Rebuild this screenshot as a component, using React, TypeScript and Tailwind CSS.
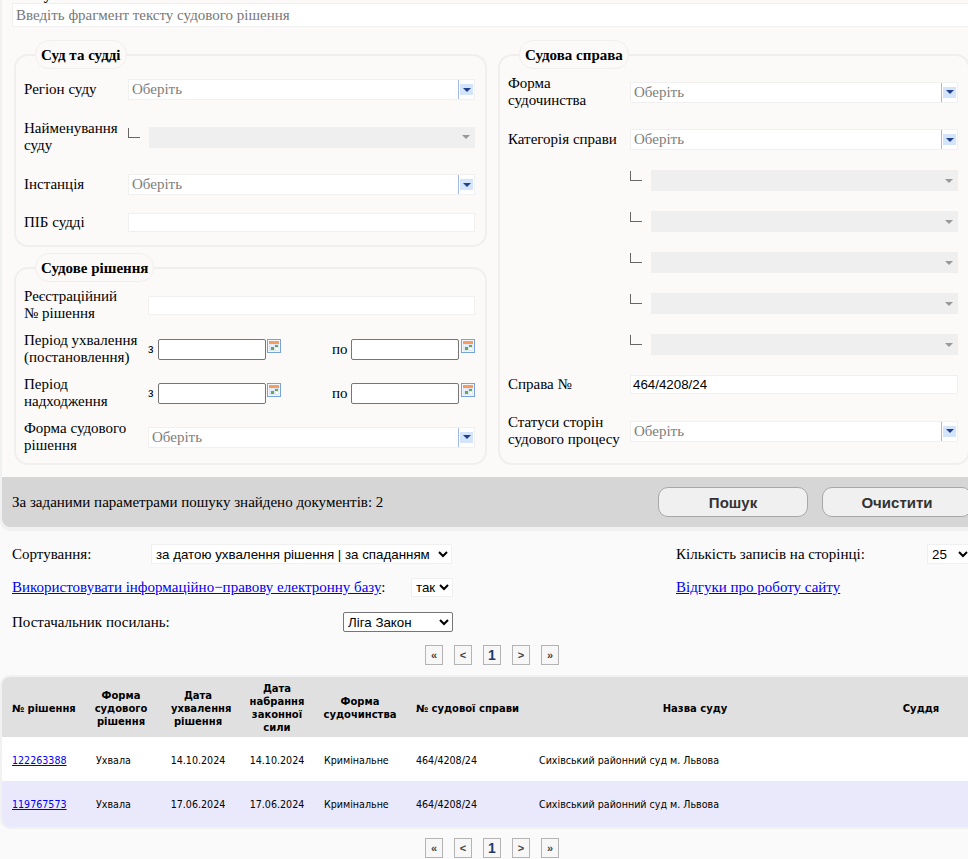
const serif = "font-['Liberation_Serif',serif]";

function Arrow() {
  return (
    <span className="flex h-full w-[15px] shrink-0 items-center border-l border-[#a3bbe3] pl-[1px]">
      <span className="flex h-[11px] w-[13px] items-center justify-center bg-[#d3e4fb]">
        <svg width="8" height="4" viewBox="0 0 8 4">
          <polygon points="0,0 8,0 4,4" fill="#22408c" />
        </svg>
      </span>
    </span>
  );
}

function Combo({ className = "" }: { className?: string }) {
  return (
    <div
      className={`flex h-[21px] items-center justify-between border border-[#f0f0f0] bg-white pl-[3px] text-[#7d7d7d] ${className}`}
    >
      <span>Оберіть</span>
      <span className="flex h-full items-center pr-[1px]">
        <Arrow />
      </span>
    </div>
  );
}

// disabled select with the little corner mark before it
function SubSelect({ className = "" }: { className?: string }) {
  return (
    <div className={`flex items-start ${className}`}>
      <div className="mt-[1px] h-[10px] w-[12px] shrink-0 border-b border-l border-[#666666]" />
      <div className="ml-[9px] flex h-[21px] flex-1 items-center justify-end bg-[#efefef] pr-[5px]">
        <svg width="8" height="4" viewBox="0 0 8 4">
          <polygon points="0,0 8,0 4,4" fill="#999999" />
        </svg>
      </div>
    </div>
  );
}

function TextBox({ value = "", className = "" }: { value?: string; className?: string }) {
  return (
    <div
      className={`flex h-[19px] items-center border border-[#f0f0f0] bg-white px-[2px] font-['Liberation_Sans',sans-serif] text-[13.33px] text-black ${className}`}
    >
      {value}
    </div>
  );
}

function CalendarIcon() {
  return (
    <svg width="14" height="14" viewBox="0 0 14 14" className="block">
      <rect x="0.5" y="0.5" width="13" height="13" fill="#f4f7fc" stroke="#78a2da" />
      <rect x="2" y="2" width="10" height="3" fill="#f79c5e" />
      <rect x="2" y="5" width="10" height="7" fill="#dfe8f6" />
      <rect x="3" y="6" width="1" height="1" fill="#ffffff" />
      <rect x="5" y="6" width="1" height="1" fill="#ffffff" />
      <rect x="8" y="6" width="3" height="2" fill="#6aa84f" />
      <rect x="4" y="8" width="3" height="3" fill="#6aa84f" />
      <rect x="9" y="9" width="2" height="2" fill="#ffffff" />
    </svg>
  );
}

function DateRange() {
  return (
    <div className="flex h-[21px] flex-1 items-center">
      <span className="w-[10px] font-['Liberation_Sans',sans-serif] text-[12px]">з</span>
      <div className="h-[21px] w-[108px] rounded-[2px] border border-[#767676] bg-white" />
      <span className="ml-[1px] self-start">
        <CalendarIcon />
      </span>
      <span className="ml-[51px] w-[19px]">по</span>
      <div className="h-[21px] w-[108px] rounded-[2px] border border-[#767676] bg-white" />
      <span className="ml-[2px] self-start">
        <CalendarIcon />
      </span>
    </div>
  );
}

function Group({
  title,
  width = "w-[472px]",
  children,
}: {
  title: string;
  width?: string;
  children: React.ReactNode;
}) {
  return (
    <fieldset className={`${width} min-w-0 rounded-[14px] border-2 border-[#f0efed]`}>
      <legend className="ml-[19px] h-[29px] rounded-[14px] border border-[#f0efed] bg-[#fbfaf8] px-[5px] text-[15px] leading-[28px] font-bold">
        {title}
      </legend>
      {children}
    </fieldset>
  );
}

function Pager({ className = "" }: { className?: string }) {
  const items = ["«", "<", "1", ">", "»"];
  return (
    <div className={`flex gap-[11px] pl-[425px] ${className}`}>
      {items.map((item, i) => (
        <span
          key={i}
          className={`flex h-[20px] w-[18px] items-center justify-center border border-[#b4b4b4] bg-[#f7f7f7] font-bold font-['Liberation_Sans',sans-serif] ${
            item === "1" ? "text-[14px] text-[#1f3a6e]" : "text-[11px] text-[#444444]"
          }`}
        >
          {item}
        </span>
      ))}
    </div>
  );
}

const rows = [
  { id: "122263388", date: "14.10.2024", bg: "bg-white h-[44px]", pad: "pt-[2px]" },
  { id: "119767573", date: "17.06.2024", bg: "bg-[#e9e9fb] h-[46px]", pad: "" },
];

export default function App() {
  return (
    <div className={`h-[859px] w-[968px] overflow-hidden bg-[#fafafa] text-[15px] leading-[17px] text-black ${serif}`}>
      <div className="w-[990px] rounded-bl-[10px] border-b-4 border-l-2 border-[#f1f1f1] bg-[#fbfaf8]">
        <div className="h-[3px] overflow-hidden pl-[10px]">
          <div className="-mt-[13px] font-bold">Пошук</div>
        </div>
        <div className="ml-[10px] flex h-[24px] w-[970px] items-center border border-[#f0f0f0] bg-white pl-[3px] text-[#777777]">
          Введіть фрагмент тексту судового рішення
        </div>

        <div className="mt-[13px] flex gap-[11px] pl-[12px]">
          <div className="flex flex-col gap-[6px]">
            <Group title="Суд та судді" width="w-[473px]">
              <div className="pb-[13px] pl-[8px] pr-[10px]">
                <div className="mt-[10px] flex items-center">
                  <span className="w-[104px]">Регіон суду</span>
                  <Combo className="flex-1" />
                </div>
                <div className="mt-[20px] flex h-[34px] items-center">
                  <span className="w-[104px]">Найменування суду</span>
                  <SubSelect className="flex-1" />
                </div>
                <div className="mt-[20px] flex items-center">
                  <span className="w-[104px]">Інстанція</span>
                  <Combo className="flex-1" />
                </div>
                <div className="mt-[18px] flex items-center">
                  <span className="w-[104px]">ПІБ судді</span>
                  <TextBox className="flex-1" />
                </div>
              </div>
            </Group>
            <Group title="Судове рішення" width="w-[473px]">
              <div className="pb-[9px] pl-[8px] pr-[10px]">
                <div className="mt-[6px] flex h-[34px] items-center">
                  <span className="w-[124px]">
                    Реєстраційний
                    <br />№ рішення
                  </span>
                  <TextBox className="flex-1" />
                </div>
                <div className="mt-[10px] flex h-[34px] items-center">
                  <span className="w-[125px]">
                    Період ухвалення
                    <br />
                    (постановлення)
                  </span>
                  <DateRange />
                </div>
                <div className="mt-[10px] flex h-[34px] items-center">
                  <span className="w-[125px]">
                    Період
                    <br />
                    надходження
                  </span>
                  <DateRange />
                </div>
                <div className="mt-[10px] flex h-[34px] items-center">
                  <span className="w-[124px]">
                    Форма судового
                    <br />
                    рішення
                  </span>
                  <Combo className="flex-1" />
                </div>
              </div>
            </Group>
          </div>

          <Group title="Судова справа">
            <div className="pb-[15px] pl-[8px] pr-[10px]">
              <div className="mt-[6px] flex h-[34px] items-center">
                <span className="w-[122px]">
                  Форма
                  <br />
                  судочинства
                </span>
                <Combo className="flex-1" />
              </div>
              <div className="mt-[20px] flex items-center">
                <span className="w-[122px]">Категорія справи</span>
                <Combo className="flex-1" />
              </div>
              <div className="mt-[20px] flex flex-col gap-[20px] pl-[122px]">
                <SubSelect />
                <SubSelect />
                <SubSelect />
                <SubSelect />
                <SubSelect />
              </div>
              <div className="mt-[20px] flex items-center">
                <span className="w-[122px]">Справа №</span>
                <TextBox className="flex-1" value="464/4208/24" />
              </div>
              <div className="mt-[20px] flex h-[34px] items-center">
                <span className="w-[122px]">
                  Статуси сторін
                  <br />
                  судового процесу
                </span>
                <Combo className="flex-1" />
              </div>
            </div>
          </Group>
        </div>

        <div className="mt-[12px] flex h-[50px] items-center rounded-bl-[8px] bg-[#d6d6d6] pl-[10px]">
          <span className="w-[646px]">За заданими параметрами пошуку знайдено документів: 2</span>
          <button className="h-[30px] w-[150px] rounded-[10px] border border-[#a8a8a8] bg-[#f0f0f0] font-['Liberation_Sans',sans-serif] text-[15px] font-bold text-[#333333]">
            Пошук
          </button>
          <button className="ml-[14px] h-[30px] w-[150px] rounded-[10px] border border-[#a8a8a8] bg-[#f0f0f0] font-['Liberation_Sans',sans-serif] text-[15px] font-bold text-[#333333]">
            Очистити
          </button>
        </div>
      </div>

      <div className="mt-[13px] flex h-[20px] w-[990px] items-center pl-[12px]">
        <span className="w-[139px]">Сортування:</span>
        <select className="h-[20px] w-[301px] border border-[#f0f0f0] bg-white font-['Liberation_Sans',sans-serif] text-[13.33px]">
          <option>за датою ухвалення рішення | за спаданням</option>
        </select>
        <span className="ml-[224px] w-[251px]">Кількість записів на сторінці:</span>
        <select className="h-[20px] w-[45px] border border-[#f0f0f0] bg-white font-['Liberation_Sans',sans-serif] text-[13.33px]">
          <option>25</option>
        </select>
      </div>

      <div className="mt-[14px] flex h-[19px] w-[990px] items-center pl-[12px]">
        <span className="w-[399px]">
          <a href="#" className="text-[#0000ee] underline">
            Використовувати інформаційно−правову електронну базу
          </a>
          :
        </span>
        <select className="h-[19px] w-[42px] border border-[#f0f0f0] bg-white font-['Liberation_Sans',sans-serif] text-[13.33px]">
          <option>так</option>
        </select>
        <a href="#" className="ml-[223px] text-[#0000ee] underline">
          Відгуки про роботу сайту
        </a>
      </div>

      <div className="mt-[15px] flex h-[20px] items-center pl-[12px]">
        <span className="w-[331px]">Постачальник посилань:</span>
        <select className="h-[20px] w-[110px] rounded-[2px] border border-[#767676] bg-white font-['Liberation_Sans',sans-serif] text-[13.33px]">
          <option>Ліга Закон</option>
        </select>
      </div>

      <Pager className="mt-[13px]" />

      <div className="mt-[10px] w-[990px] overflow-hidden rounded-l-[10px] border-y-2 border-l-2 border-[#f1f1f1] font-['DejaVu_Sans_Condensed','DejaVu_Sans',sans-serif] text-[10.6px] leading-[13px]">
        <table className="w-[988px] table-fixed border-collapse">
          <colgroup>
            <col className="w-[84px]" />
            <col className="w-[70px]" />
            <col className="w-[84px]" />
            <col className="w-[74px]" />
            <col className="w-[92px]" />
            <col className="w-[123px]" />
            <col className="w-[332px]" />
            <col className="w-[129px]" />
          </colgroup>
          <thead className="font-['DejaVu_Sans',sans-serif] text-[10px]">
            <tr className="h-[60px] bg-[#e0e0e0] font-bold">
              <th className="pl-[10px] pt-[2px] text-left">№ рішення</th>
              <th className="pt-[2px]">Форма судового рішення</th>
              <th className="px-[15px] pt-[2px]">Дата ухвалення рішення</th>
              <th className="px-[6px] pt-[2px]">Дата набрання законної сили</th>
              <th className="pt-[2px]">Форма судочинства</th>
              <th className="pl-[10px] pt-[2px] text-left whitespace-nowrap">№ судової справи</th>
              <th className="pt-[2px]">Назва суду</th>
              <th className="pr-[9px] pt-[2px]">Суддя</th>
            </tr>
          </thead>
          <tbody>
            {rows.map((row) => (
              <tr key={row.id} className={row.bg}>
                <td className={`pl-[10px] ${row.pad}`}>
                  <a href="#" className="text-[#0000ee] underline">
                    {row.id}
                  </a>
                </td>
                <td className={`pl-[10px] ${row.pad}`}>Ухвала</td>
                <td className={`text-center ${row.pad}`}>{row.date}</td>
                <td className={`text-center ${row.pad}`}>{row.date}</td>
                <td className={`pl-[10px] ${row.pad}`}>Кримінальне</td>
                <td className={`pl-[10px] ${row.pad}`}>464/4208/24</td>
                <td className={`pl-[10px] ${row.pad}`}>Сихівський районний суд м. Львова</td>
                <td />
              </tr>
            ))}
          </tbody>
        </table>
      </div>

      <Pager className="mt-[9px]" />
    </div>
  );
}
